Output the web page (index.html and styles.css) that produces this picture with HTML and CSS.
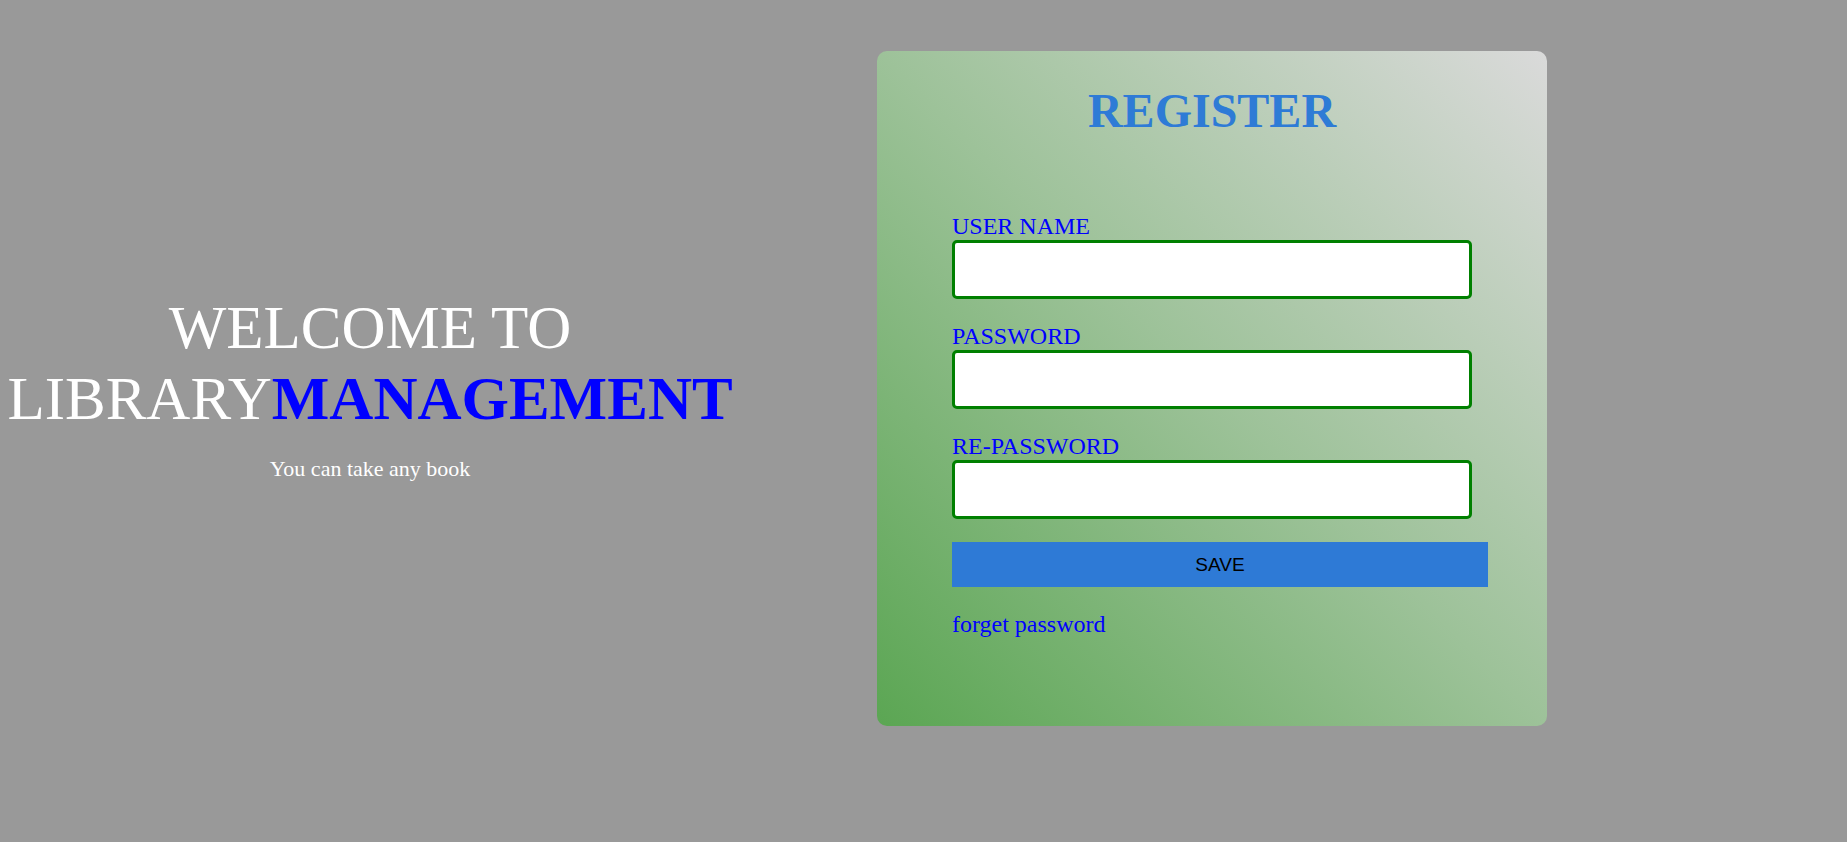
FILE: index.html
```html
<!DOCTYPE html>
<html lang="en">
<head>
<meta charset="utf-8">
<title>Library Management - Register</title>
<link rel="stylesheet" href="styles.css">
</head>
<body>
<main class="page">
  <section class="intro">
    <h1 class="intro-title">WELCOME TO<br>LIBRARY<span class="accent">MANAGEMENT</span></h1>
    <p class="intro-sub">You can take any book</p>
  </section>
  <section class="card">
    <h2 class="card-title">REGISTER</h2>
    <form class="form">
      <div class="field">
        <label class="field-label" for="user">USER NAME</label>
        <input class="field-input" id="user" type="text">
      </div>
      <div class="field">
        <label class="field-label" for="pass">PASSWORD</label>
        <input class="field-input" id="pass" type="password">
      </div>
      <div class="field">
        <label class="field-label" for="repass">RE-PASSWORD</label>
        <input class="field-input" id="repass" type="password">
      </div>
      <button class="save-btn" type="button">SAVE</button>
      <p class="forget">forget password</p>
    </form>
  </section>
</main>
</body>
</html>
```

FILE: styles.css
```css
* {
  box-sizing: border-box;
}

html, body {
  margin: 0;
  padding: 0;
}

body {
  background: #999999;
  font-family: "Liberation Serif", "Times New Roman", serif;
  min-height: 842px;
}

.page {
  display: flex;
  align-items: center;
  gap: 137px;
  padding-top: 51px;
}

.intro {
  width: 740px;
  flex: none;
  text-align: center;
  color: #ffffff;
  padding-bottom: 3px;
}

.intro-title {
  margin: 0;
  font-size: 61px;
  line-height: 71px;
  font-weight: normal;
  white-space: nowrap;
}

.accent {
  color: #0000ff;
  font-weight: bold;
}

.intro-sub {
  margin: 22px 0 0;
  font-size: 22px;
}

.card {
  width: 670px;
  height: 675px;
  flex: none;
  border-radius: 10px;
  padding: 33px 0 0 75px;
  background: linear-gradient(to top right, #5ba653 0%, #9dc299 50%, #dadada 100%);
}

.card-title {
  margin: 0 0 0 -75px;
  text-align: center;
  font-size: 48px;
  line-height: 54px;
  font-weight: bold;
  color: #2e7bd6;
}

.form {
  margin-top: 74px;
  display: flex;
  flex-direction: column;
  align-items: flex-start;
}

.field {
  display: flex;
  flex-direction: column;
  align-items: flex-start;
  margin-bottom: 23px;
}

.field-label {
  font-size: 24px;
  line-height: 28px;
  color: #0000ff;
}

.field-input {
  width: 520px;
  height: 59px;
  border: 3px solid #008000;
  border-radius: 5px;
  background: #ffffff;
  outline: none;
  padding: 0 8px;
  font-size: 18px;
}

.save-btn {
  width: 536px;
  height: 45px;
  border: none;
  background: #2e7ad6;
  color: #000000;
  font-family: "Liberation Sans", Arial, sans-serif;
  font-size: 19px;
  cursor: pointer;
  padding: 0;
}

.forget {
  margin: 23px 0 0;
  font-size: 24px;
  line-height: 28px;
  color: #0000ff;
}
```
